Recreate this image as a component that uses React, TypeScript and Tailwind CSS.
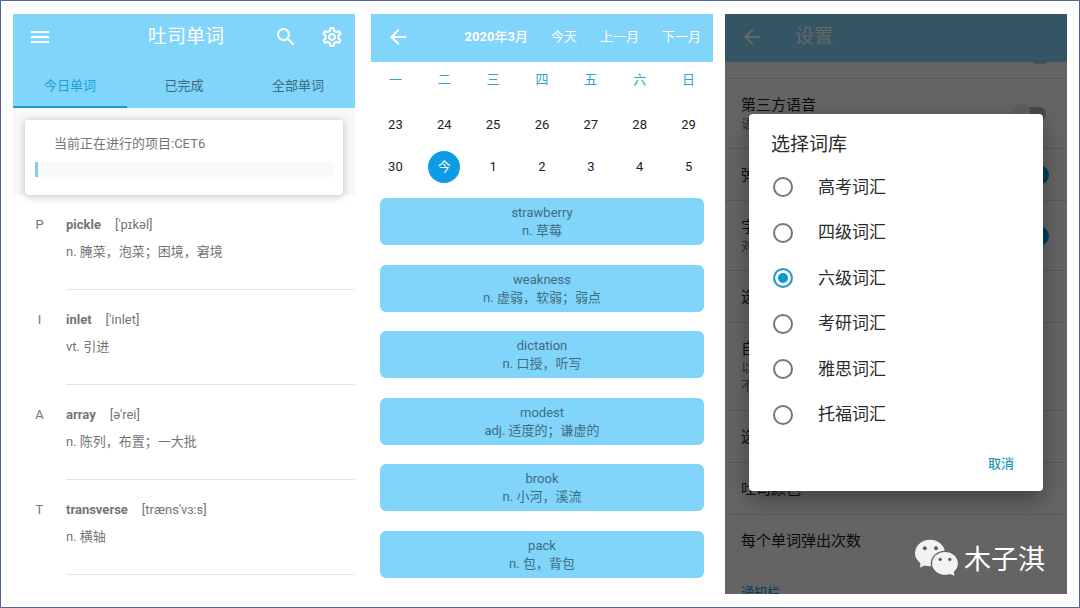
import React, { useState } from "react";
import {
    MdArrowBack,
    MdMenu,
    MdOutlineSettings,
    MdSearch
} from "react-icons/md";

const tabs = ["今日单词", "已完成", "全部单词"];

const words = [
    { word: "pickle", ipa: "['pɪkəl]", meaning: "n. 腌菜，泡菜；困境，窘境" },
    { word: "inlet", ipa: "['inlet]", meaning: "vt. 引进" },
    { word: "array", ipa: "[ə'rei]", meaning: "n. 陈列，布置；一大批" },
    { word: "transverse", ipa: "[træns'vɜ:s]", meaning: "n. 横轴" }
];

const weekdays = ["一", "二", "三", "四", "五", "六", "日"];

const days = [
    ["23", "24", "25", "26", "27", "28", "29"],
    ["30", "今", "1", "2", "3", "4", "5"]
];

const history = [
    { word: "strawberry", meaning: "n. 草莓" },
    { word: "weakness", meaning: "n. 虚弱，软弱；弱点" },
    { word: "dictation", meaning: "n. 口授，听写" },
    { word: "modest", meaning: "adj. 适度的；谦虚的" },
    { word: "brook", meaning: "n. 小河，溪流" },
    { word: "pack", meaning: "n. 包，背包" }
];

const settings: { title: string; notes?: string[]; on?: boolean }[] = [
    { title: "第三方语音", notes: ["语"], on: false },
    { title: "弹", on: true },
    { title: "字", notes: ["对"], on: true },
    { title: "选" },
    { title: "自", notes: ["以", "不"] },
    { title: "选" },
    { title: "吐司颜色" },
    { title: "每个单词弹出次数" }
];

const books = [
    "高考词汇",
    "四级词汇",
    "六级词汇",
    "考研词汇",
    "雅思词汇",
    "托福词汇"
];

const TodayWords = () => {
    const [tab, setTab] = useState(0);
    const progress = 1;

    return (
        <section className="flex flex-col flex-1 min-w-0 mr-1">
            <header className="bg-[#81d4fa]">
                <div className="grid grid-cols-[1fr_auto_1fr] items-center h-12 pl-[15px] pr-[11px] pb-[2px] text-white">
                    <button className="justify-self-start" aria-label="Menu">
                        <MdMenu size={24} />
                    </button>
                    <h1 className="text-[19px]">吐司单词</h1>
                    <div className="flex justify-end gap-[22px]">
                        <button aria-label="Search">
                            <MdSearch size={24} />
                        </button>
                        <button aria-label="Settings">
                            <MdOutlineSettings size={24} />
                        </button>
                    </div>
                </div>
                <nav className="grid grid-cols-3">
                    {tabs.map((t, i) => (
                        <button
                            key={t}
                            onClick={() => setTab(i)}
                            className={`h-[46px] pt-1 border-b-2 ${
                                tab === i
                                    ? "text-[#18a3d2] border-[#1a9dce]"
                                    : "text-[#3f6a7d] border-transparent"
                            }`}
                        >
                            {t}
                        </button>
                    ))}
                </nav>
            </header>
            <div className="px-3 pt-3 bg-[#f8f8f8]">
                <div className="h-[75px] px-[10px] pt-[14px] rounded bg-white shadow-[0_1px_9px_rgba(0,0,0,0.25)]">
                    <p className="pl-[19px] leading-5">
                        当前正在进行的项目:CET6
                    </p>
                    <div
                        className="mt-2 h-[15px] bg-[#f8fafa]"
                        role="progressbar"
                        aria-label="CET6"
                        aria-valuenow={progress}
                    >
                        <div
                            className="h-full bg-[#81d0e8]"
                            style={{ width: `${progress}%` }}
                        />
                    </div>
                </div>
            </div>
            <ul>
                {words.map((w) => (
                    <li key={w.word} className="flex h-[95px]">
                        <span className="w-[53px] pt-5 leading-5 text-center uppercase">
                            {w.word[0]}
                        </span>
                        <div className="grow pt-5 border-b border-[#dfe6e8]">
                            <div className="flex gap-[14px] leading-5">
                                <b>{w.word}</b>
                                <span>{w.ipa}</span>
                            </div>
                            <p className="mt-[7px] leading-5">{w.meaning}</p>
                        </div>
                    </li>
                ))}
            </ul>
        </section>
    );
};

const Calendar = () => (
    <section className="flex flex-col flex-1 min-w-0">
        <header className="flex items-center h-12 pl-[15px] pr-3 pb-[2px] gap-[23px] bg-[#81d4fa] text-white">
            <button className="mr-auto" aria-label="Back">
                <MdArrowBack size={24} />
            </button>
            <h2 className="font-bold">
                2020<span className="font-medium">年</span>3
                <span className="font-medium">月</span>
            </h2>
            <button>今天</button>
            <button>上一月</button>
            <button>下一月</button>
        </header>
        <table className="w-full table-fixed text-center">
            <thead>
                <tr className="h-[42px] align-top text-[#2fa5c4]">
                    {weekdays.map((d) => (
                        <th key={d} className="pt-2 font-normal leading-5">
                            {d}
                        </th>
                    ))}
                </tr>
            </thead>
            <tbody className="text-[#222]">
                {days.map((week) => (
                    <tr key={week[0]} className="h-[42px]">
                        {week.map((d) => (
                            <td key={d} className="p-0">
                                {d === "今" ? (
                                    <span className="flex items-center justify-center size-8 mx-auto rounded-full bg-[#0d9be4] text-white">
                                        {d}
                                    </span>
                                ) : (
                                    d
                                )}
                            </td>
                        ))}
                    </tr>
                ))}
            </tbody>
        </table>
        <ul className="flex flex-col grow justify-between px-[9px] pt-[10px] pb-4 text-center text-[#3f6c7f]">
            {history.map((w) => (
                <li
                    key={w.word}
                    className="pt-[6px] pb-[5px] rounded-md bg-[#81d4fa] leading-[18px]"
                >
                    <p>{w.word}</p>
                    <p>{w.meaning}</p>
                </li>
            ))}
        </ul>
    </section>
);

const Switch = ({ on }: { on: boolean }) => (
    <input
        type="checkbox"
        role="switch"
        defaultChecked={on}
        className="relative shrink-0 appearance-none w-8 h-[14px] rounded-full bg-[#b5b5b5] checked:bg-[#8fcdec] before:absolute before:-left-[3px] before:-top-[3px] before:size-5 before:rounded-full before:bg-[#ececec] checked:before:left-[15px] checked:before:bg-[#039be5]"
    />
);

const WeChatLogo = () => (
    <svg width="43" height="37" viewBox="0 0 43 37" aria-hidden="true">
        <g fill="#f2f2f2">
            <path d="M6 20 L5 28.5 L13 25 Z" />
            <ellipse cx="15" cy="14" rx="15" ry="13.2" />
        </g>
        <circle cx="9.8" cy="9.3" r="2" fill="#5f5f5f" />
        <circle cx="21" cy="9.3" r="2" fill="#5f5f5f" />
        <ellipse cx="30" cy="24.4" rx="14.2" ry="12.7" fill="#5f5f5f" />
        <g fill="#f2f2f2">
            <path d="M32 34 L39.5 36.8 L38.5 30 Z" />
            <ellipse cx="30" cy="24.4" rx="12.9" ry="11.4" />
        </g>
        <circle cx="25.2" cy="20.4" r="1.7" fill="#5f5f5f" />
        <circle cx="34.8" cy="20.4" r="1.7" fill="#5f5f5f" />
    </svg>
);

const BookDialog = () => {
    const [book, setBook] = useState("六级词汇");

    return (
        <div
            role="dialog"
            aria-label="选择词库"
            className="flex flex-col w-full rounded-sm bg-white text-[#2b2b2b] shadow-[0_8px_20px_rgba(0,0,0,0.35)]"
        >
            <h3 className="px-[22px] pt-4 pb-[5px] text-[19px] leading-[30px]">
                选择词库
            </h3>
            <div className="flex flex-col h-[273px]">
                {books.map((b) => (
                    <label
                        key={b}
                        className="flex flex-1 items-center gap-[25px] px-6 text-[17px]"
                    >
                        <input
                            type="radio"
                            name="book"
                            checked={book === b}
                            onChange={() => setBook(b)}
                            className="appearance-none size-5 rounded-full border-2 border-[#767676] checked:border-[#2a9bc8] checked:bg-[#0c95d6] checked:shadow-[inset_0_0_0_3px_#fff]"
                        />
                        {b}
                    </label>
                ))}
            </div>
            <div className="flex items-center justify-end h-[53px] px-[29px]">
                <button className="font-medium text-[#1f97bd]">取消</button>
            </div>
        </div>
    );
};

const Settings = () => (
    <section className="relative flex flex-col flex-1 min-w-0 overflow-hidden bg-[#fafafa]">
        <header className="flex items-center h-12 px-[15px] pb-[2px] gap-[31px] bg-[#81d4fa] text-white">
            <button aria-label="Back">
                <MdArrowBack size={24} />
            </button>
            <h2 className="text-[19px]">设置</h2>
        </header>
        <div className="h-0 grow overflow-hidden">
            {/* tail of the row scrolled under the header */}
            <div className="flex justify-end h-[17px] pr-[21px] border-b border-[#dcdcdc]">
                <div className="w-3 h-[2px] rounded-b-full bg-[#c4c4c4]" />
            </div>
            {settings.map((s, i) => (
                <label
                    key={i}
                    className="flex items-center justify-between pl-4 pr-[21px] pt-4 pb-[15px] border-b border-[#dcdcdc] last-of-type:border-transparent"
                >
                    <span>
                        <span className="block text-[15px] leading-5 text-[#222]">
                            {s.title}
                        </span>
                        {s.notes?.map((n) => (
                            <span key={n} className="block leading-[18px]">
                                {n}
                            </span>
                        ))}
                    </span>
                    {s.on !== undefined && <Switch on={s.on} />}
                </label>
            ))}
            <h3 className="px-4 pt-4 leading-5 text-[#039be5]">通知栏</h3>
        </div>
        <div className="absolute inset-0 flex items-center px-6 pb-1 bg-black/60">
            <BookDialog />
        </div>
        <div className="absolute right-[22px] bottom-[18px] flex items-end gap-[6px] text-white">
            <WeChatLogo />
            <span className="text-[27px] leading-8">木子淇</span>
        </div>
    </section>
);

export default function App() {
    return (
        <div className="flex min-h-screen border border-[#4d659a] bg-white px-3 py-[13px] font-['Roboto','Noto_Sans_CJK_SC',sans-serif] text-[13px] text-[#757575]">
            <main className="flex grow gap-3">
                <TodayWords />
                <Calendar />
                <Settings />
            </main>
        </div>
    );
}
